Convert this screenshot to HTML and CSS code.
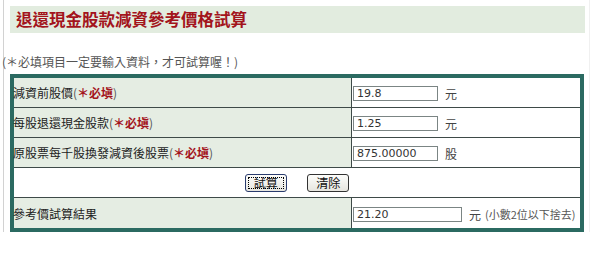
FILE: index.html
```html
<!DOCTYPE html>
<html lang="zh-Hant">
<head>
    <meta charset="UTF-8">
    <title>退還現金股款減資參考價格試算</title>
    <link rel="stylesheet" href="styles.css">
</head>
<body>
    <div class="page">
        <div class="title-bar">
            <h1>退還現金股款減資參考價格試算</h1>
        </div>
        <p class="note">(＊必填項目一定要輸入資料，才可試算喔！)</p>

        <table class="calc">
            <tr>
                <td class="label">減資前股價<span class="req">(<b>＊必塡</b>)</span></td>
                <td class="field"><input type="text" class="num" value="19.8"><span class="unit">元</span></td>
            </tr>
            <tr>
                <td class="label">每股退還現金股款<span class="req">(<b>＊必塡</b>)</span></td>
                <td class="field"><input type="text" class="num" value="1.25"><span class="unit">元</span></td>
            </tr>
            <tr>
                <td class="label">原股票每千股換發減資後股票<span class="req">(<b>＊必塡</b>)</span></td>
                <td class="field"><input type="text" class="num" value="875.00000"><span class="unit">股</span></td>
            </tr>
            <tr>
                <td class="actions" colspan="2">
                    <button class="btn default">試算</button>
                    <button class="btn">清除</button>
                </td>
            </tr>
            <tr>
                <td class="label last">參考價試算結果</td>
                <td class="field last"><input type="text" class="num result" value="21.20"><span class="unit">元</span><span class="hint">(小數2位以下捨去)</span></td>
            </tr>
        </table>
    </div>
</body>
</html>
```

FILE: styles.css
```css
body {
    margin: 0;
    background: #fff;
    font-family: "Noto Sans CJK TC", "Noto Sans", sans-serif;
    color: #222;
}
.page {
    margin-left: 3px;
    width: 587px;
    height: 232px;
    padding-top: 6px;
    box-sizing: border-box;
    border-left: 1px solid #d2d2d2;
    border-right: 1px solid #f0f0f0;
}
.title-bar {
    margin-left: 6px;
    width: 575px;
    height: 27px;
    background: #e2ecdf;
    display: flex;
    align-items: center;
    padding-left: 6px;
    box-sizing: border-box;
}
.title-bar h1 {
    margin: 0;
    font-size: 16.5px;
    line-height: 1;
    font-weight: bold;
    color: #a3141c;
}
.note {
    margin: 22px 0 5px -2px;
    font-size: 12px;
    line-height: 14px;
    color: #555;
}
.calc {
    margin-left: 6px;
    width: 574px;
    border: 4px solid #2b6a61;
    border-spacing: 0;
    font-size: 12px;
}
.calc td {
    height: 30px;
    padding: 0;
    box-sizing: border-box;
    border-bottom: 1px solid #3e4a48;
}
.calc td.last {
    border-bottom: none;
}
.label {
    width: 337px;
    background: #e5ede3;
    color: #222;
    text-indent: -1px;
}
.req {
    color: #555;
}
.req b {
    color: #a3141c;
    font-weight: bold;
}
.field {
    background: #fff;
    border-left: 1px solid #3e4a48;
    padding-left: 1px !important;
}
.num {
    width: 85px;
    height: 15px;
    padding: 0 3px;
    box-sizing: border-box;
    border: 1px solid #7b8584;
    font-family: "DejaVu Sans", sans-serif;
    font-size: 11px;
    color: #333;
    vertical-align: middle;
}
.num.result {
    width: 109px;
}
.unit {
    margin-left: 7px;
    color: #444;
    vertical-align: middle;
}
.hint {
    margin-left: 4px;
    font-size: 11px;
    color: #555;
    vertical-align: middle;
}
.actions {
    text-align: center;
    background: #fff;
}
.btn {
    height: 18px;
    padding: 0 8px;
    margin: 0 9px;
    font-family: "Noto Sans CJK TC", sans-serif;
    font-size: 12px;
    line-height: 14px;
    color: #111;
    background: linear-gradient(#fdfdfb, #e6e5df);
    border: 1px solid #333;
    border-radius: 3px;
    vertical-align: middle;
}
.btn.default {
    border-color: #2a3c6e;
    outline: 1px dotted #000;
    outline-offset: -4px;
}
```
